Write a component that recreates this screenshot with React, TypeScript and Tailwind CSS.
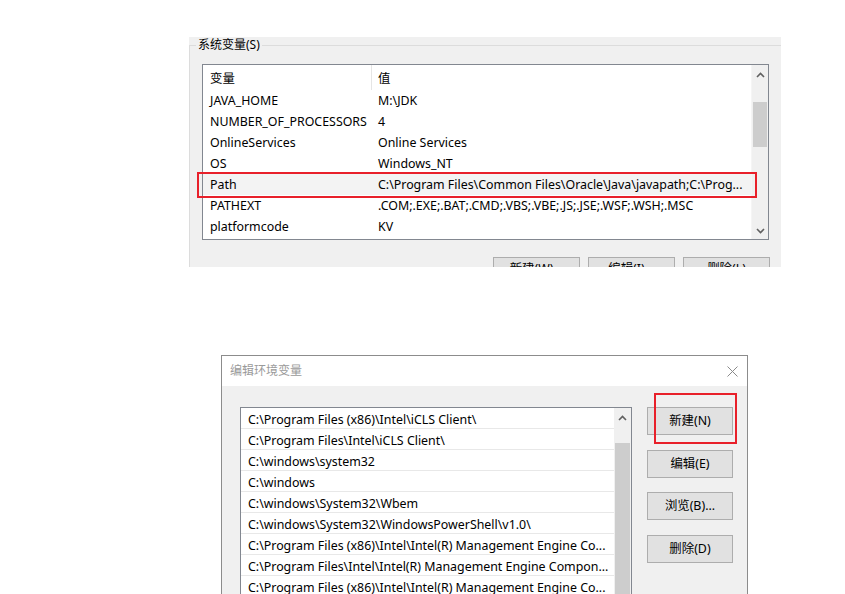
import React from 'react';

const font = { fontFamily: '"Noto Sans", "Noto Sans CJK SC", sans-serif' };

const sysVars: [string, string][] = [
  ['JAVA_HOME', 'M:\\JDK'],
  ['NUMBER_OF_PROCESSORS', '4'],
  ['OnlineServices', 'Online Services'],
  ['OS', 'Windows_NT'],
  ['Path', 'C:\\Program Files\\Common Files\\Oracle\\Java\\javapath;C:\\Prog...'],
  ['PATHEXT', '.COM;.EXE;.BAT;.CMD;.VBS;.VBE;.JS;.JSE;.WSF;.WSH;.MSC'],
  ['platformcode', 'KV'],
];

const paths = [
  'C:\\Program Files (x86)\\Intel\\iCLS Client\\',
  'C:\\Program Files\\Intel\\iCLS Client\\',
  'C:\\windows\\system32',
  'C:\\windows',
  'C:\\windows\\System32\\Wbem',
  'C:\\windows\\System32\\WindowsPowerShell\\v1.0\\',
  'C:\\Program Files (x86)\\Intel\\Intel(R) Management Engine Co...',
  'C:\\Program Files\\Intel\\Intel(R) Management Engine Compon...',
  'C:\\Program Files (x86)\\Intel\\Intel(R) Management Engine Co...',
];

function Chevron({ up }: { up?: boolean }) {
  return (
    <svg width="9" height="6" viewBox="0 0 9 6" className="block">
      <polyline
        points={up ? '1,5 4.5,1.5 8,5' : '1,1 4.5,4.5 8,1'}
        fill="none"
        stroke="#606060"
        strokeWidth="1.6"
      />
    </svg>
  );
}

function WinButton({ label, className = '' }: { label: string; className?: string }) {
  return (
    <div
      className={`flex shrink-0 items-center justify-center border border-[#adadad] bg-[#e1e1e1] text-[12.4px] text-black ${className}`}
    >
      {label}
    </div>
  );
}

function SystemVariables() {
  return (
    <div className="relative ml-[189px] mt-[37px] h-[230px] w-[592px] overflow-hidden bg-[#f0f0f0]">
      {/* group box */}
      <div className="mt-[8px] h-[230px] border-l border-t border-[#dcdcdc] pl-[12px] pt-[18px]">
        <div className="flex h-[176px] w-[567px] border border-[#828790] bg-white">
          <div className="min-w-0 flex-1 overflow-hidden">
            <div className="flex h-[25px] items-center text-[12.4px]">
              <div className="flex h-full w-[169px] shrink-0 items-center border-r border-[#e5e5e5] pl-[7px] pt-[3px]">变量</div>
              <div className="pl-[6px] pt-[3px]">值</div>
            </div>
            {sysVars.map(([name, value]) => (
              <div
                key={name}
                className={`flex h-[21px] items-center pt-[2px] text-[12.4px] text-black ${name === 'Path' ? 'bg-[#f3f3f3]' : ''}`}
              >
                <div className="w-[169px] shrink-0 whitespace-nowrap pl-[7px]">{name}</div>
                <div className="whitespace-nowrap pl-[6px]">{value}</div>
              </div>
            ))}
          </div>
          <div className="flex w-[17px] shrink-0 flex-col border-l border-[#f5f5f5] bg-[#f0f0f0]">
            <div className="flex h-[17px] items-center justify-center pt-[2px]">
              <Chevron up />
            </div>
            <div className="mx-[1px] mt-[20px] h-[45px] bg-[#cdcdcd]" />
            <div className="flex-1" />
            <div className="flex h-[17px] items-center justify-center">
              <Chevron />
            </div>
          </div>
        </div>
        <div className="ml-[291px] mt-[17px] flex gap-[8px]">
          <WinButton label="新建(W)..." className="h-[24px] w-[87px]" />
          <WinButton label="编辑(I)..." className="h-[24px] w-[87px]" />
          <WinButton label="删除(L)" className="h-[24px] w-[87px]" />
        </div>
      </div>
      {/* group label */}
      <div className="absolute left-[7px] top-[0px] bg-[#f0f0f0] px-[2px] text-[12px] leading-[16px] text-black">
        系统变量(S)
      </div>
      {/* highlight */}
      <div className="absolute left-[8px] top-[135px] h-[26px] w-[560px] border-2 border-[#e8202a]" />
    </div>
  );
}

function EditDialog() {
  return (
    <div className="relative ml-[221px] mt-[88px] h-[239px] w-[527px] overflow-hidden border-x border-t border-[#8c8c8c] bg-[#f0f0f0]">
      <div className="flex h-[30px] items-center justify-between bg-white pl-[8px] pr-[9px]">
        <span className="text-[12px] text-[#9a9a9a]">编辑环境变量</span>
        <svg width="11" height="11" viewBox="0 0 11 11">
          <path d="M0.5 0.5 L10.5 10.5 M10.5 0.5 L0.5 10.5" stroke="#8a8a8a" strokeWidth="1" />
        </svg>
      </div>
      <div className="flex pl-[18px] pt-[21px]">
        <div className="flex h-[200px] w-[392px] shrink-0 border-l border-r border-t border-[#828790] bg-white">
          <div className="min-w-0 flex-1 overflow-hidden">
            {paths.map((p, i) => (
              <div
                key={i}
                className="flex h-[21px] items-center whitespace-nowrap border-b border-[#e8e8e8] pl-[7px] pt-[4px] text-[12.4px] text-black"
              >
                {p}
              </div>
            ))}
          </div>
          <div className="flex w-[17px] shrink-0 flex-col bg-[#f0f0f0]">
            <div className="flex h-[20px] items-center justify-center">
              <Chevron up />
            </div>
            <div className="mx-[1px] mt-[15px] flex-1 bg-[#cdcdcd]" />
          </div>
        </div>
        <div className="ml-[15px] flex flex-col gap-[15px]">
          <WinButton label="新建(N)" className="h-[28px] w-[86px]" />
          <WinButton label="编辑(E)" className="h-[28px] w-[86px]" />
          <WinButton label="浏览(B)..." className="-mt-[1px] h-[28px] w-[86px]" />
          <WinButton label="删除(D)" className="h-[28px] w-[86px]" />
        </div>
      </div>
      {/* highlight */}
      <div className="absolute left-[432px] top-[37px] h-[51px] w-[83px] border-2 border-[#e8202a]" />
    </div>
  );
}

export default function App() {
  return (
    <div className="h-[594px] w-[845px] overflow-hidden bg-white" style={font}>
      <SystemVariables />
      <EditDialog />
    </div>
  );
}
